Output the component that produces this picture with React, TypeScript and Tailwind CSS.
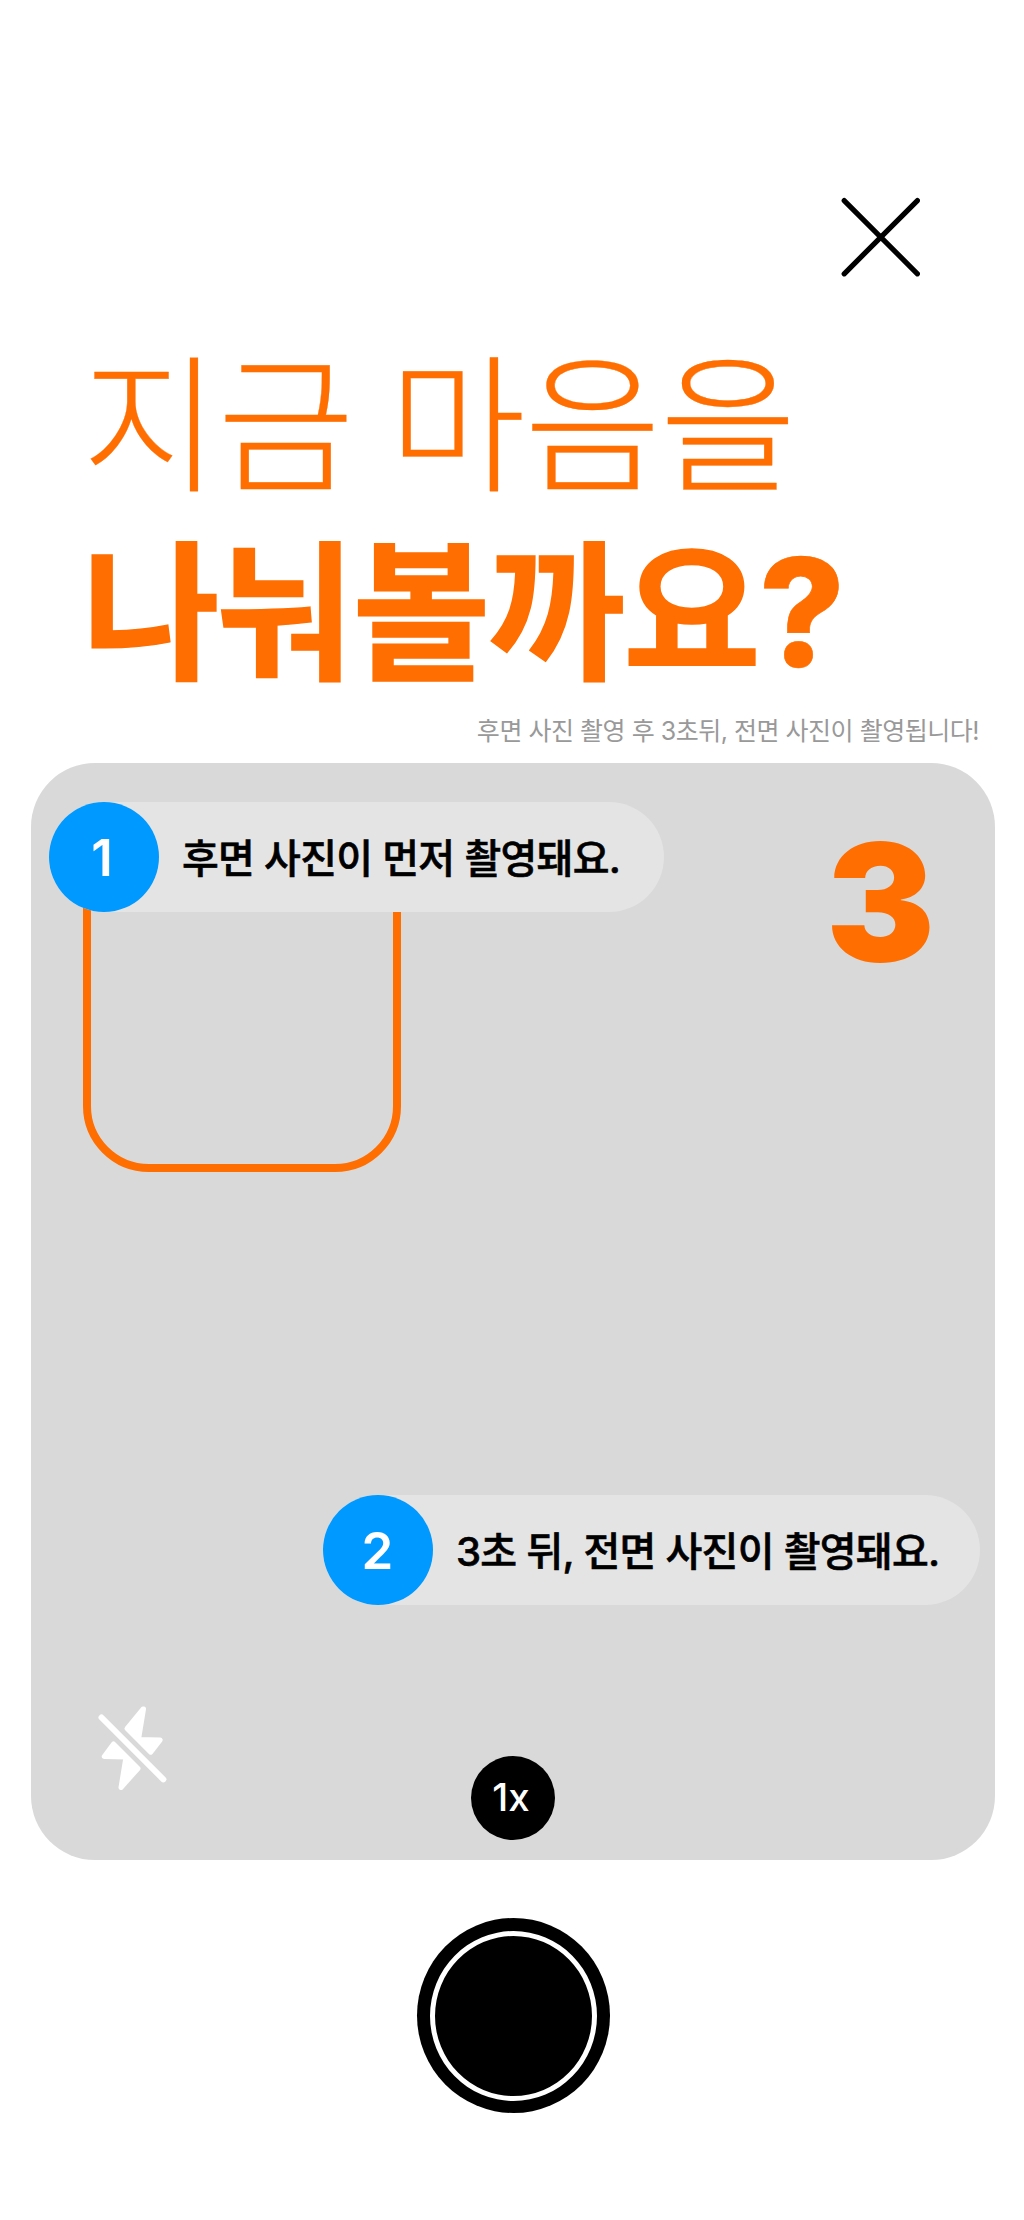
import React from "react";

type StepPillProps = {
  step: number;
  className: string;
  stepClassName: string;
  children: React.ReactNode;
};

function StepPill({ step, className, stepClassName, children }: StepPillProps) {
  return (
    <div className={`relative flex h-[110px] items-center rounded-full bg-[#e4e4e4] ${className}`}>
      <span
        className={`flex h-[110px] w-[110px] shrink-0 items-center justify-center rounded-full bg-[#0099ff] text-[51px] font-semibold leading-none text-white ${stepClassName}`}
      >
        {step}
      </span>
      <span className="ml-[23px] mt-[3px] whitespace-nowrap text-[40px] font-medium leading-[60px] tracking-[-0.72px] text-black [-webkit-text-stroke:0.6px_#000]">
        {children}
      </span>
    </div>
  );
}

export default function App() {
  return (
    <main className="flex h-[2220px] w-[1024px] flex-col overflow-hidden bg-white font-['Inter','Noto_Sans_CJK_KR',sans-serif]">
      <header className="flex h-[340px] shrink-0 justify-end pr-[104px] pt-[197px]">
        <button aria-label="닫기" className="h-[80px] w-[80px]">
          <svg viewBox="0 0 80 80" className="h-full w-full" stroke="#000" strokeWidth="5.2" strokeLinecap="round">
            <path d="M4.2 3.6 77.4 76.8M77.4 3.6 4.2 76.8" />
          </svg>
        </button>
      </header>

      <h1 className="-mt-[4px] h-[367px] shrink-0 whitespace-nowrap pl-[82px] text-[#ff6e00]">
        <span className="block h-[188px] text-[149px] font-light leading-[180px] tracking-[-1.6px] [-webkit-text-stroke:0.3px_#ff6e00] [word-spacing:-4.4px]">
          지금 마음을
        </span>
        <span className="block h-[179px] text-[149.5px] font-bold leading-[180px] tracking-[-2.2px] [-webkit-text-stroke:1.6px_#ff6e00]">
          나눠볼까요<span className="relative -top-[2px] font-extrabold [-webkit-text-stroke:0.6px_#ff6e00]">?</span>
        </span>
      </h1>

      <p className="h-[60px] shrink-0 whitespace-nowrap pr-[45px] text-right text-[25px] leading-[56px] tracking-[-0.48px] text-[#999999]">
        후면 사진 촬영 후 3초뒤, 전면 사진이 촬영됩니다!
      </p>

      <section className="relative ml-[31px] flex h-[1097px] w-[964px] shrink-0 flex-col rounded-[64px] bg-[#d9d9d9]">
        <div className="absolute left-[52px] top-[80px] h-[329px] w-[318px] rounded-[66px] border-8 border-[#ff6e00]" />
        <div className="flex h-[732px] items-start justify-between pr-[60px] pt-[39px]">
          <StepPill step={1} className="ml-[18px] w-[615px]" stepClassName="pr-[4px]">
            후면 사진이 먼저 촬영돼요.
          </StepPill>
          <strong className="mt-[40px] text-[163px] font-[870] leading-[120px] text-[#ff6e00]">3</strong>
        </div>
        <StepPill step={2} className="ml-[292px] w-[657px] shrink-0" stepClassName="pr-[1px]">
          3초 뒤, 전면 사진이 촬영돼요.
        </StepPill>
        <div className="relative flex flex-1 justify-center pt-[151px]">
          <svg
            viewBox="0 0 110 120"
            className="absolute left-[49px] top-[85px] h-[120px] w-[110px]"
            fill="#fff"
            stroke="#fff"
            strokeLinecap="round"
            strokeLinejoin="round"
          >
            <path strokeWidth="6" d="M21.5 27.5 83.3 89.3" />
            <path strokeWidth="5" d="M63 19 47 38.5 70.7 62.2 80.2 50 58.5 49.5 63.5 19Z" />
            <path strokeWidth="5" d="M33.5 54 24.3 66.5 46 67 41 97.5 58 78.5Z" />
          </svg>
          <span className="flex h-[84px] w-[84px] items-center justify-center rounded-full bg-black pb-[2px] pr-[4px] text-[38.5px] font-medium leading-none text-white">
            1x
          </span>
        </div>
      </section>

      <button
        aria-label="촬영"
        className="ml-[417px] mt-[58px] flex h-[195px] w-[193px] shrink-0 items-center justify-center rounded-[50%] bg-black"
      >
        <span className="h-[170px] w-[167px] rounded-[50%] border-[5.5px] border-white" />
      </button>
    </main>
  );
}
